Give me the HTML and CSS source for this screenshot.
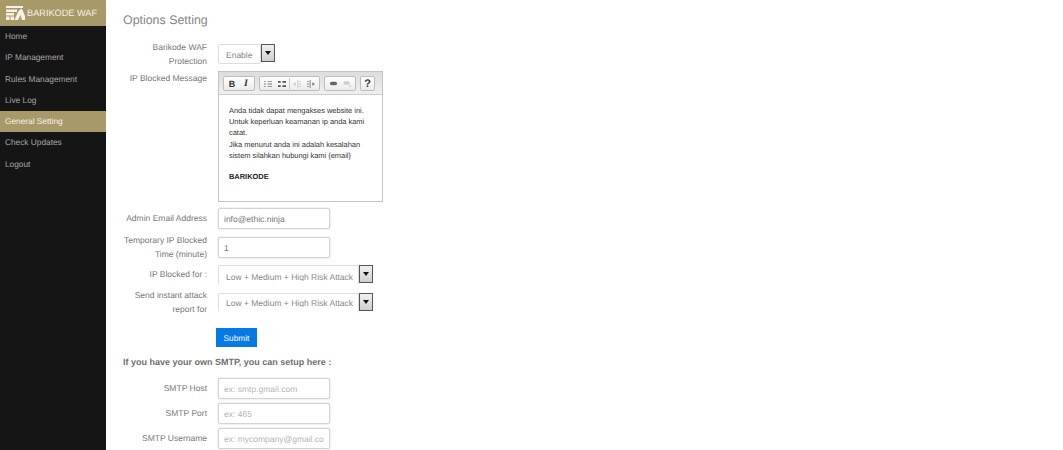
FILE: index.html
```html
<!DOCTYPE html>
<html lang="en">
<head>
    <meta charset="UTF-8">
    <title>Barikode WAF - Options Setting</title>
    <link rel="stylesheet" href="styles.css">
</head>
<body>
    <div class="sidebar">
        <div class="brand">
            <svg class="brand-logo" width="19" height="14" viewBox="0 0 19 14">
                <path d="M0 0h17v2H0zM0 3.500h11v2.500H0zM0 7h8v2.500H0zM0 10.500h3.500V14H0zM4.500 10.500H8V14H4.500z" fill="#f4f1e6"/>
                <path d="M8.500 14l3.500-8 3-3.500 1.500 1.500L19 10v4h-3l-1.500-5-2.500 5z" fill="#f4f1e6"/>
            </svg>
            <span>BARIKODE WAF</span>
        </div>
        <ul class="nav">
            <li>Home</li>
            <li>IP Management</li>
            <li>Rules Management</li>
            <li>Live Log</li>
            <li class="active">General Setting</li>
            <li>Check Updates</li>
            <li>Logout</li>
        </ul>
    </div>

    <div class="content">
        <h1>Options Setting</h1>

        <div class="row row-waf">
            <label>Barikode WAF Protection</label>
            <div class="select-box select-small">
                <span class="select-value"><span class="select-text">Enable</span></span>
                <span class="select-btn"><i></i></span>
            </div>
        </div>

        <div class="row row-editor">
            <label>IP Blocked Message</label>
            <div class="editor">
                <div class="toolbar">
                    <div class="tool-group">
                        <span class="tool tool-b">B</span>
                        <span class="tool tool-i">I</span>
                    </div>
                    <div class="tool-group">
                        <span class="tool">
                            <svg width="8" height="8" viewBox="0 0 9 9"><path d="M0 1h2v1H0zM0 4h2v1H0zM0 7h2v1H0zM4 1h5v1H4zM4 4h5v1H4zM4 7h5v1H4z" fill="#777"/></svg>
                        </span>
                        <span class="tool">
                            <svg width="8" height="8" viewBox="0 0 9 9"><path d="M0 1h3v2H0zM0 6h3v2H0zM5 1h4v2H5zM5 6h4v2H5z" fill="#555"/></svg>
                        </span>
                        <span class="tool-sep"></span>
                        <span class="tool">
                            <svg width="8" height="8" viewBox="0 0 9 9"><path d="M5 0h1v9H5zM7 1h2v1H7zM7 4h2v1H7zM7 7h2v1H7zM0 4.500l3-2v4z" fill="#c4c4c4"/></svg>
                        </span>
                        <span class="tool">
                            <svg width="8" height="8" viewBox="0 0 9 9"><path d="M3 0h1v9H3zM0 1h2v1H0zM0 4h2v1H0zM0 7h2v1H0zM9 4.500l-3-2v4z" fill="#777"/></svg>
                        </span>
                    </div>
                    <div class="tool-group">
                        <span class="tool">
                            <svg width="9" height="7" viewBox="0 0 10 7"><rect x="1" y="1.500" width="8" height="4" rx="2" fill="#666"/></svg>
                        </span>
                        <span class="tool">
                            <svg width="9" height="7" viewBox="0 0 10 7"><rect x="0.500" y="1" width="7" height="4" rx="2" fill="#d0d0d0"/><path d="M7 4l3 3H7z" fill="#d0d0d0"/></svg>
                        </span>
                    </div>
                    <div class="tool-group">
                        <span class="tool tool-help">?</span>
                    </div>
                </div>
                <div class="editor-body">
                    <p>Anda tidak dapat mengakses website ini.<br>Untuk keperluan keamanan ip anda kami catat.<br>Jika menurut anda ini adalah kesalahan sistem silahkan hubungi kami {email}</p>
                    <p class="sign">BARIKODE</p>
                </div>
            </div>
        </div>

        <div class="row row-email">
            <label>Admin Email Address</label>
            <input class="field" type="text" value="info@ethic.ninja">
        </div>

        <div class="row row-time">
            <label>Temporary IP Blocked Time (minute)</label>
            <input class="field" type="text" value="1">
        </div>

        <div class="row row-blocked">
            <label>IP Blocked for :</label>
            <div class="select-box select-wide">
                <span class="select-value"><span class="select-text">Low + Medium + High Risk Attack</span></span>
                <span class="select-btn"><i></i></span>
            </div>
        </div>

        <div class="row row-report">
            <label>Send instant attack report for</label>
            <div class="select-box select-wide select-clipped">
                <span class="select-value"><span class="select-text">Low + Medium + High Risk Attack</span></span>
                <span class="select-btn"><i></i></span>
            </div>
        </div>

        <button class="submit-btn" type="button">Submit</button>

        <h4>If you have your own SMTP, you can setup here :</h4>

        <div class="row row-smtp">
            <label>SMTP Host</label>
            <input class="field" type="text" placeholder="ex: smtp.gmail.com">
        </div>
        <div class="row row-smtp">
            <label>SMTP Port</label>
            <input class="field" type="text" placeholder="ex: 465">
        </div>
        <div class="row row-smtp">
            <label>SMTP Username</label>
            <input class="field" type="text" placeholder="ex: mycompany@gmail.com">
        </div>
    </div>
</body>
</html>
```

FILE: styles.css
```css
* {
    margin: 0;
    padding: 0;
    box-sizing: border-box;
    font-family: "Liberation Sans", Arial, sans-serif;
    text-rendering: geometricPrecision;
}

html, body {
    height: 450px;
    overflow: hidden;
}

body {
    display: flex;
    background: #fff;
    color: #777;
    font-size: 8.500px;
}

/* sidebar */
.sidebar {
    width: 106px;
    flex-shrink: 0;
    background: #151515;
}

.brand {
    display: flex;
    align-items: center;
    height: 26px;
    padding: 0 0 0 6px;
    background: #a89a68;
    color: #f2efe4;
    font-size: 9.200px;
}

.brand-logo {
    margin-right: 2px;
}

.nav {
    list-style: none;
}

.nav li {
    height: 21.300px;
    line-height: 21.500px;
    padding-left: 5px;
    color: #a5a5a5;
    font-size: 8.300px;
}

.nav li.active {
    background: #a89a68;
    color: #f4f1e6;
}

/* main form */
.content {
    flex: 1;
    padding: 12px 0 0 17px;
}

h1 {
    font-size: 12.400px;
    font-weight: normal;
    line-height: 16px;
    color: #858585;
    margin-bottom: 16px;
}

h4 {
    font-size: 9px;
    line-height: 12px;
    color: #6f6f6f;
    margin: 9px 0 10px;
}

.row {
    display: flex;
    align-items: flex-start;
}

.row label {
    width: 84px;
    margin-right: 11px;
    text-align: right;
    font-size: 8.500px;
    line-height: 14px;
    color: #777;
}

.row-waf { height: 27px; }
.row-editor { height: 137px; }
.row-email { height: 29px; }
.row-time { height: 28px; }
.row-blocked { height: 28px; }
.row-report { height: 35px; }
.row-smtp { height: 25px; }

.row-waf label { margin-top: -4px; }
.row-email label { margin-top: 3px; }
.row-time label { margin-top: -4px; }
.row-blocked label { margin-top: 2px; }
.row-report label { margin-top: -5px; }
.row-smtp label { margin-top: 3px; }

.field {
    width: 112px;
    height: 21px;
    padding: 0 5px;
    border: 1px solid #d4d4d4;
    border-radius: 2px;
    box-shadow: 0 0 2px #ccc;
    color: #777;
    font-size: 8.500px;
    outline: none;
}

.field::placeholder {
    color: #b5b5b5;
    opacity: 1;
}

/* select look */
.select-box {
    display: flex;
    align-items: flex-start;
}

.select-value {
    display: block;
    height: 20px;
    padding-left: 7px;
    border: 1px solid #ddd;
    border-radius: 2px;
    background: #fff;
    color: #888;
    font-size: 8.500px;
    white-space: nowrap;
    overflow: hidden;
}

.select-text {
    display: block;
    height: 18px;
    line-height: 20px;
    overflow: hidden;
}

.select-small .select-value {
    width: 43px;
}

.select-wide .select-value {
    width: 141px;
    height: 19px;
    border-bottom: 0;
}

.select-wide .select-text {
    height: 15px;
    line-height: 22px;
}

.select-clipped .select-text {
    height: 13px;
    line-height: 19px;
}

.select-btn {
    display: flex;
    align-items: center;
    justify-content: center;
    width: 14px;
    height: 18px;
    border: 1px solid #555;
    background: linear-gradient(#f0f0f0, #cfcfcf);
}

.select-btn i {
    width: 0;
    height: 0;
    border: 3.500px solid transparent;
    border-top: 4px solid #111;
    border-bottom: 0;
}

/* rich text editor */
.editor {
    width: 165px;
    height: 131px;
    border: 1px solid #c4c4c4;
}

.toolbar {
    display: flex;
    gap: 4px;
    height: 23px;
    padding: 4px 4px 0;
    border-bottom: 1px solid #ccc;
    background: linear-gradient(#dcdcdc, #efefef);
}

.tool-group {
    display: flex;
    align-items: center;
    height: 15px;
    padding: 0 1px;
    border: 1px solid #bdbdbd;
    border-radius: 2px;
    background: linear-gradient(#fff, #ebebeb);
}

.tool {
    display: flex;
    align-items: center;
    justify-content: center;
    width: 14px;
    height: 13px;
    color: #333;
    font-size: 9px;
    font-weight: bold;
}

.tool-i {
    font-family: "Liberation Serif", serif;
    font-style: italic;
    font-size: 10px;
}

.tool-help {
    width: 11px;
    font-size: 11px;
}

.tool-sep {
    width: 1px;
    height: 11px;
    background: #ccc;
}

.editor-body {
    padding: 10px 10px 0;
    font-size: 7.450px;
    line-height: 11.200px;
    color: #333;
}

.sign {
    margin-top: 10px;
    font-weight: bold;
    color: #222;
}

.submit-btn {
    display: block;
    width: 41px;
    height: 19px;
    margin-left: 93px;
    border: none;
    background: #0579e6;
    color: #fff;
    font-size: 8.300px;
}
```
